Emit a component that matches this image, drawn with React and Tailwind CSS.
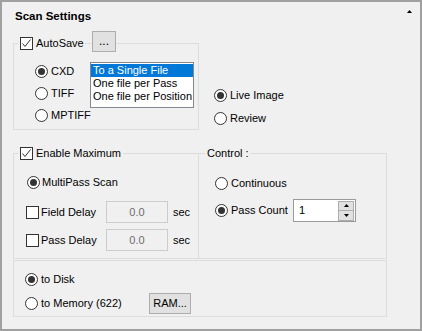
import React from 'react';

function Check({ checked }) {
  return (
    <span className="flex h-[13px] w-[13px] shrink-0 items-center justify-center border border-[#333333] bg-white">
      {checked && (
        <svg width="11" height="11" viewBox="0 0 11 11">
          <path d="M1.5 5.5 L4 8.5 L9.5 1.5" fill="none" stroke="#333333" strokeWidth="1" />
        </svg>
      )}
    </span>
  );
}

function Radio({ checked }) {
  return (
    <span className="flex h-[13px] w-[13px] shrink-0 items-center justify-center rounded-full border border-[#333333] bg-white">
      {checked && <span className="h-[7px] w-[7px] rounded-full bg-[#333333]" />}
    </span>
  );
}

function Arrow({ down }) {
  return (
    <svg width="5" height="3" viewBox="0 0 5 3">
      <polygon points={down ? '0,0 5,0 2.5,3' : '0,3 5,3 2.5,0'} fill="#000" />
    </svg>
  );
}

function DelayRow({ label, className }) {
  return (
    <div className={`flex h-[22px] items-center pl-[12px] ${className}`}>
      <div className="flex w-[80px] items-center">
        <Check />
        <span className="ml-[2px]">{label}</span>
      </div>
      <div className="flex h-[22px] w-[62px] items-center justify-center border border-[#cccccc] bg-[#f0f0f0] text-[#6d6d6d]">0.0</div>
      <span className="ml-[5px]">sec</span>
    </div>
  );
}

export default function App() {
  return (
    <div className="h-[331px] w-[422px] border-2 border-[#a0a0a0] bg-[#f0f0f0] font-['Liberation_Sans',Arial,sans-serif] text-[11px] leading-[13px] text-black">
      {/* Title */}
      <div className="flex items-start justify-between pl-[13px] pr-[8px] pt-[8px]">
        <span className="h-[13px] text-[11.5px] font-bold">Scan Settings</span>
        <svg width="5" height="3" viewBox="0 0 5 3">
          <polygon points="0,3 5,3 2.5,0" fill="#000" />
        </svg>
      </div>

      <div className="pl-[11px]">
        {/* AutoSave + live image */}
        <div className="flex items-start">
          <div className="mt-[20px] h-[87px] w-[186px] border border-[#dcdcdc]">
            <div className="relative -mt-[13px] flex items-start">
              <div className="ml-[4px] mt-[6px] flex w-[67px] items-center bg-[#f0f0f0] px-[2px]">
                <Check checked />
                <span className="ml-[3px]">AutoSave</span>
              </div>
              <button className="ml-[7px] flex h-[21px] w-[24px] items-center justify-center border border-[#adadad] bg-[#e1e1e1] text-[12px]">...</button>
            </div>
            <div className="mt-[8px] flex pl-[21px]">
              <div className="flex w-[55px] flex-col">
                <div className="flex h-[22px] items-center"><Radio checked /><span className="ml-[3px]">CXD</span></div>
                <div className="flex h-[22px] items-center"><Radio /><span className="ml-[3px]">TIFF</span></div>
                <div className="flex h-[22px] items-center"><Radio /><span className="ml-[3px]">MPTIFF</span></div>
              </div>
              <div className="mt-[2px] h-[46px] w-[104px] border border-[#828790] bg-white pt-[1px]">
                <div className="h-[13px] bg-[#0078d7] pl-[2px] text-white">To a Single File</div>
                <div className="h-[13px] pl-[2px]">One file per Pass</div>
                <div className="h-[13px] pl-[2px]">One file per Position</div>
              </div>
            </div>
          </div>
          <div className="ml-[15px] mt-[61px] flex flex-col">
            <div className="flex h-[23px] items-center"><Radio checked /><span className="ml-[3px]">Live Image</span></div>
            <div className="flex h-[23px] items-center"><Radio /><span className="ml-[3px]">Review</span></div>
          </div>
        </div>

        {/* Enable Maximum + Control */}
        <div className="mt-[23px] flex">
          <div className="h-[106px] w-[186px] border border-[#dcdcdc]">
            <div className="relative -mt-[7px] flex">
              <div className="ml-[4px] flex items-center bg-[#f0f0f0] px-[2px]">
                <Check checked />
                <span className="ml-[3px]">Enable Maximum</span>
              </div>
            </div>
            <div className="mt-[11px] flex h-[22px] items-center pl-[13px]">
              <Radio checked />
              <span className="ml-[2px]">MultiPass Scan</span>
            </div>
            <DelayRow label="Field Delay" className="mt-[8px]" />
            <DelayRow label="Pass Delay" className="mt-[6px]" />
          </div>
          <div className="-ml-[1px] h-[106px] w-[189px] border border-[#dcdcdc]">
            <div className="relative -mt-[7px] flex">
              <span className="ml-[6px] bg-[#f0f0f0] px-[2px]">Control :</span>
            </div>
            <div className="mt-[12px] flex h-[22px] items-center pl-[16px]">
              <Radio />
              <span className="ml-[3px]">Continuous</span>
            </div>
            <div className="mt-[5px] flex h-[23px] items-center pl-[16px]">
              <div className="flex w-[78px] items-center">
                <Radio checked />
                <span className="ml-[3px]">Pass Count</span>
              </div>
              <div className="flex h-[23px] w-[63px] items-center border border-[#9a9a9a] bg-white pl-[5px] pr-[1px]">
                <span className="flex-1">1</span>
                <div className="flex flex-col">
                  <span className="flex h-[10px] w-[16px] items-center justify-center border border-[#adadad] bg-[#e1e1e1]"><Arrow /></span>
                  <span className="flex h-[10px] w-[16px] items-center justify-center border border-t-0 border-[#adadad] bg-[#e1e1e1]"><Arrow down /></span>
                </div>
              </div>
            </div>
          </div>
        </div>

        {/* Destination */}
        <div className="mt-[1px] h-[57px] w-[374px] border border-[#dcdcdc] pl-[11px] pt-[7px]">
          <div className="flex h-[22px] items-center">
            <Radio checked />
            <span className="ml-[3px]">to Disk</span>
          </div>
          <div className="mt-[2px] flex h-[22px] items-center">
            <div className="flex w-[124px] items-center">
              <Radio />
              <span className="ml-[3px]">to Memory (622)</span>
            </div>
            <button className="flex h-[21px] w-[42px] items-center justify-center border border-[#adadad] bg-[#e1e1e1]">RAM...</button>
          </div>
        </div>
      </div>
    </div>
  );
}
